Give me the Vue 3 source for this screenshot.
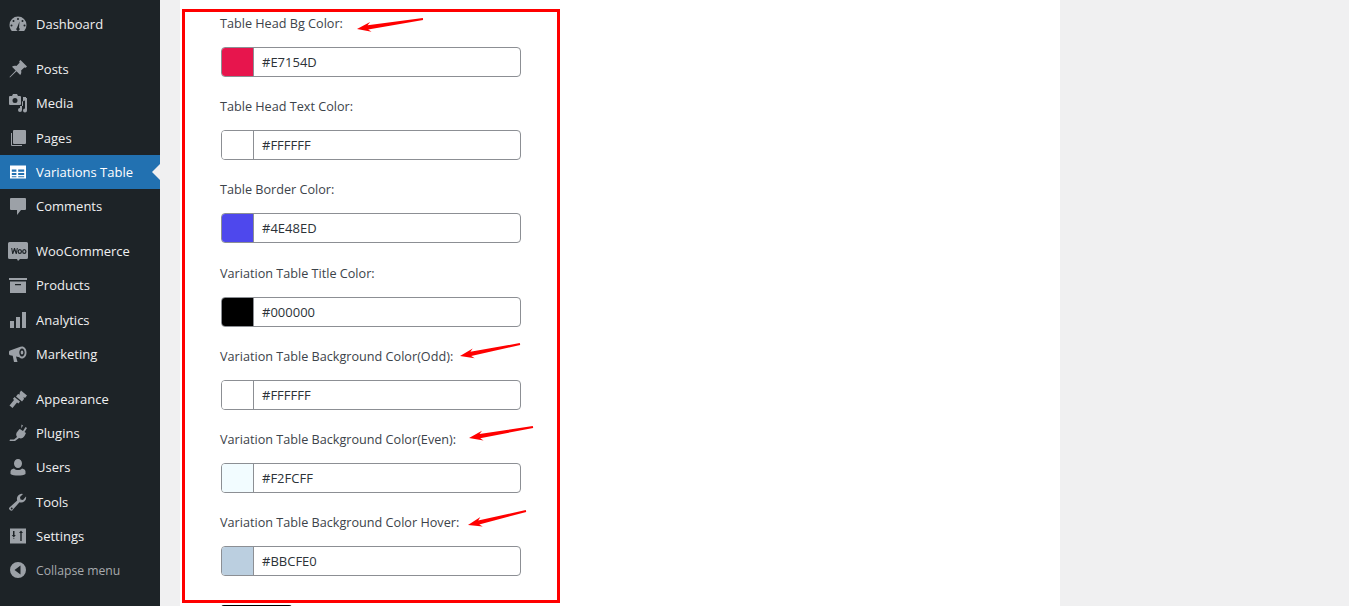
<template>
  <div class="page">
    <aside class="sidebar">
      <ul class="menu">
        <li
          v-for="item in menu"
          :key="item.name"
          class="menu-item"
          :class="{ active: item.active, gap: item.gap, collapse: item.collapse }"
        >
          <svg class="menu-icon" viewBox="0 0 20 20" fill="currentColor" fill-rule="evenodd">
            <path v-for="(d, i) in item.icon" :key="i" :d="d" />
          </svg>
          <span>{{ item.name }}</span>
        </li>
      </ul>
    </aside>

    <main class="content">
      <div class="panel">
        <section class="color-box">
          <div v-for="field in fields" :key="field.label" class="field">
            <label class="field-label">{{ field.label }}</label>
            <div class="color-input">
              <span class="swatch" :style="{ background: field.value }"></span>
              <span class="value">{{ field.value }}</span>
            </div>
          </div>
        </section>
        <button class="save-btn"></button>
      </div>
    </main>

    <!-- red annotation arrows sit on top of the form -->
    <svg class="arrows" viewBox="0 0 1349 606">
      <polygon v-for="(a, i) in arrows" :key="i" :points="a" fill="#f00" />
    </svg>
  </div>
</template>

<script setup>
const menu = [
  {
    name: 'Dashboard',
    icon: ['M10 2.500a8.500 8.500 0 0 0-8.500 8.500c0 2.300.9 4.400 2.300 6h12.400a8.500 8.500 0 0 0 2.300-6A8.500 8.500 0 0 0 10 2.500zM10 4a1 1 0 1 1 0 2 1 1 0 0 1 0-2zM5.500 6a1 1 0 1 1 0 2 1 1 0 0 1 0-2zM14.500 6a1 1 0 1 1 0 2 1 1 0 0 1 0-2zM3.500 10.500a1 1 0 1 1 0 2 1 1 0 0 1 0-2zM16.500 10.500a1 1 0 1 1 0 2 1 1 0 0 1 0-2zM11.500 7.500l-.5 6.200a1.700 1.700 0 1 1-2 0z']
  },
  {
    name: 'Posts',
    gap: true,
    icon: ['M12.500 1l6.500 6.500-1.300 1.300-1.400-.4-3.200 3.200c.5 1.700.2 3.300-.9 4.400L8.500 12.300 2 18.500l-.5-.5 6.200-6.500-3.700-3.700c1.100-1.100 2.700-1.400 4.400-.9l3.200-3.200-.4-1.400z']
  },
  {
    name: 'Media',
    icon: [
      'M2 3h2l1-2h4l1 2h2a1 1 0 0 1 1 1v7a1 1 0 0 1-1 1H2a1 1 0 0 1-1-1V4a1 1 0 0 1 1-1zM7 5a2.500 2.500 0 1 0 0 5 2.500 2.500 0 0 0 0-5z',
      'M15 4h3v1h1v12.500a2 2 0 1 1-2-2v-8l-3 1v8.500a2 2 0 1 1-2-2V13h3z'
    ]
  },
  {
    name: 'Pages',
    icon: [
      'M6 2h11a1 1 0 0 1 1 1v12a1 1 0 0 1-1 1H6a1 1 0 0 1-1-1V3a1 1 0 0 1 1-1z',
      'M3 5v12a1 1 0 0 0 1 1h10v-1H4V5z'
    ]
  },
  {
    name: 'Variations Table',
    active: true,
    icon: ['M2 3.500h16v13H2zM3.800 7.500v2.300h4.600V7.500zM10.200 7.500v2.300h6V7.500zM3.800 11v2h4.600v-2zM10.200 11v2h6v-2zM3.800 14.200v1h4.600v-1zM10.200 14.200v1h6v-1z']
  },
  {
    name: 'Comments',
    icon: ['M3 2h14a1 1 0 0 1 1 1v10a1 1 0 0 1-1 1h-4l-4 5v-5H3a1 1 0 0 1-1-1V3a1 1 0 0 1 1-1z']
  },
  {
    name: 'WooCommerce',
    gap: true,
    icon: ['M1.500 1h17a1.500 1.500 0 0 1 1.500 1.500v14a1.500 1.500 0 0 1-1.500 1.500h-6.500l-2 2-1-2H1.500A1.500 1.500 0 0 1 0 16.500v-14A1.500 1.500 0 0 1 1.500 1zM3.200 7l1 6h1l1.300-3.500L7.800 13h1l1-6H8.800l-.6 3.800L7 7H6L4.800 10.800 4.200 7zM11.800 8a2.200 2.500 0 1 0 0 5 2.200 2.500 0 0 0 0-5zM11.800 9.300a1 1.200 0 1 1 0 2.400 1 1.200 0 0 1 0-2.400zM16.300 8a2.200 2.500 0 1 0 0 5 2.200 2.500 0 0 0 0-5zM16.300 9.300a1 1.200 0 1 1 0 2.400 1 1.200 0 0 1 0-2.400z']
  },
  {
    name: 'Products',
    icon: ['M1 3h18v2H1zM2 6.500h16v11.500H2zM7 9v1.200h6V9z']
  },
  {
    name: 'Analytics',
    icon: ['M2 11h4v7H2zM8 7h4v11H8zM14 2h4v16h-4z']
  },
  {
    name: 'Marketing',
    icon: ['M14 2.500c2.500 0 4.500 2.500 4.500 6s-2 6-4.500 6c-1 0-2-.5-2.800-1.300L8 12.600l1.500 5.400H6l-1.300-6.200-2.700-.6A1.500 1.500 0 0 1 1 9.800V8a1.500 1.500 0 0 1 1-1.400l9-3.300c.8-.5 2-.8 3-.8zM14 4.500c-1.500 0-2.700 1.800-2.700 4s1.200 4 2.700 4 2.700-1.800 2.700-4-1.200-4-2.700-4zM14 6.500c-.8 0-1.300.9-1.300 2s.5 2 1.300 2 1.300-.9 1.300-2-.5-2-1.300-2z']
  },
  {
    name: 'Appearance',
    gap: true,
    icon: ['M13 1.500l6 5-2 2.500-1.500-1 .5 2-2 2.500-6-5 2-2.500 2 .5-.5-1.500zM6.500 8l5.500 4.500-1.500 2-1.500-1L4.500 19 1.500 16.500 6 11l-1-1.200z']
  },
  {
    name: 'Plugins',
    icon: ['M13.500 1.500l1.500 1-2.500 4 2.500 1.500 2.500-4 1.500 1-2.500 4 1.500 1-1.500 3a4.500 4.500 0 0 1-5.500 2L7 18H1.500l.5-1.500h4l3-2.500a4.500 4.500 0 0 1 .5-5.500l2-2.500 1.500 1z']
  },
  {
    name: 'Users',
    icon: ['M10 2a4 4.500 0 1 1 0 9 4 4.500 0 0 1 0-9zM6 11.500c1 1 2.500 1.500 4 1.500s3-.5 4-1.500c2 .3 3.500 1.500 3.500 3V17c-1.500 1-4.500 1.500-7.500 1.500S4 18 2.500 17v-2.500c0-1.500 1.500-2.700 3.500-3z']
  },
  {
    name: 'Tools',
    icon: ['M18 4.500a5 5 0 0 1-6.500 5.800L5 17.500a2 2 0 1 1-3-2.500l7.200-6.500A5 5 0 0 1 15 2l-3 3 .5 2.500 2.500.5zM3.700 15.500a1 1 0 1 0 0 2 1 1 0 0 0 0-2z']
  },
  {
    name: 'Settings',
    icon: ['M2 2.500h16v15H2zM5 5v4H3.800l2 2.500 2-2.500H6.500V5zM6.500 13H5v2.500h1.500zM13 4.500l-2 2.500h1.300v8h1.400V7H15zM5 12.500h1.500v3H5z']
  },
  {
    name: 'Collapse menu',
    collapse: true,
    icon: ['M10 2a8 8 0 1 1 0 16 8 8 0 0 1 0-16zM12.500 5.500L6.500 10l6 4.500z']
  }
]

const fields = [
  { label: 'Table Head Bg Color:', value: '#E7154D' },
  { label: 'Table Head Text Color:', value: '#FFFFFF' },
  { label: 'Table Border Color:', value: '#4E48ED' },
  { label: 'Variation Table Title Color:', value: '#000000' },
  { label: 'Variation Table Background Color(Odd):', value: '#FFFFFF' },
  { label: 'Variation Table Background Color(Even):', value: '#F2FCFF' },
  { label: 'Variation Table Background Color Hover:', value: '#BBCFE0' }
]

// tail and tip of each arrow, in page pixels
const arrowLines = [
  [423, 19, 357, 29],
  [520, 344, 460, 356],
  [533, 427, 469, 438],
  [526, 511, 468, 525]
]

const arrows = arrowLines.map(([x1, y1, x2, y2]) => {
  const len = Math.hypot(x2 - x1, y2 - y1)
  const ux = (x2 - x1) / len
  const uy = (y2 - y1) / len
  const at = (along, side) => {
    const x = x2 - ux * along - uy * side
    const y = y2 - uy * along + ux * side
    return `${x.toFixed(1)},${y.toFixed(1)}`
  }
  return [
    at(0, 0),
    at(14, 5),
    at(11, 2.1),
    at(len, 0.9),
    at(len, -0.9),
    at(11, -2.1),
    at(14, -5)
  ].join(' ')
})
</script>

<style>
html,
body {
  margin: 0;
  overflow: hidden;
}
</style>

<style scoped>
.page {
  position: relative;
  display: flex;
  height: 100vh;
  overflow: hidden;
  background: #f0f0f1;
  font-family: "Open Sans", "Noto Sans", sans-serif;
}

.sidebar {
  flex: 0 0 160px;
  background: #1d2327;
}

.menu {
  list-style: none;
  margin: 0;
  padding: 7.2px 0 0;
}

.menu-item {
  display: flex;
  align-items: center;
  position: relative;
  height: 34.33px;
  padding-left: 8px;
  font-size: 13px;
  color: #f0f0f1;
}

.menu-item.gap {
  margin-top: 10.3px;
}

.menu-icon {
  flex: 0 0 20px;
  width: 20px;
  height: 20px;
  margin-right: 8px;
  color: #9ca1a7;
}

.menu-item.active {
  background: #2271b1;
  color: #fff;
}

.menu-item.active .menu-icon {
  color: #fff;
}

.menu-item.active::after {
  content: "";
  position: absolute;
  right: 0;
  top: 50%;
  margin-top: -8px;
  border: 8px solid transparent;
  border-right-color: #f0f0f1;
  border-left-width: 0;
}

.menu-item.collapse {
  font-size: 12.2px;
  color: #a7aaad;
}

.content {
  flex: 1;
  padding-left: 20px;
}

.panel {
  width: 880px;
  height: 100%;
  background: #fff;
  padding-top: 9px;
  padding-left: 2px;
  box-sizing: border-box;
}

.color-box {
  width: 378px;
  height: 594px;
  box-sizing: border-box;
  border: 3px solid #f00;
  padding: 2px 0 0 35px;
}

.field {
  margin-bottom: 20.45px;
}

.field-label {
  display: block;
  height: 20px;
  line-height: 19px;
  margin-bottom: 12.8px;
  font-size: 12.65px;
  font-weight: 500;
  color: #3c434a;
  white-space: nowrap;
}

.color-input {
  display: flex;
  align-items: center;
  width: 300px;
  height: 30px;
  margin-left: 1px;
  box-sizing: border-box;
  border: 1px solid #8c8f94;
  border-radius: 4px;
  background: #fff;
  overflow: hidden;
}

.swatch {
  flex: 0 0 31px;
  height: 100%;
  border-right: 1px solid #8c8f94;
}

.value {
  margin-left: 8px;
  font-size: 13px;
  color: #2c3338;
}

.save-btn {
  display: block;
  width: 71px;
  height: 20px;
  margin: 2px 0 0 39px;
  padding: 0;
  border: none;
  border-radius: 3px;
  background: #000;
}

.arrows {
  position: absolute;
  left: 0;
  top: 0;
  width: 1349px;
  height: 606px;
  pointer-events: none;
}
</style>
